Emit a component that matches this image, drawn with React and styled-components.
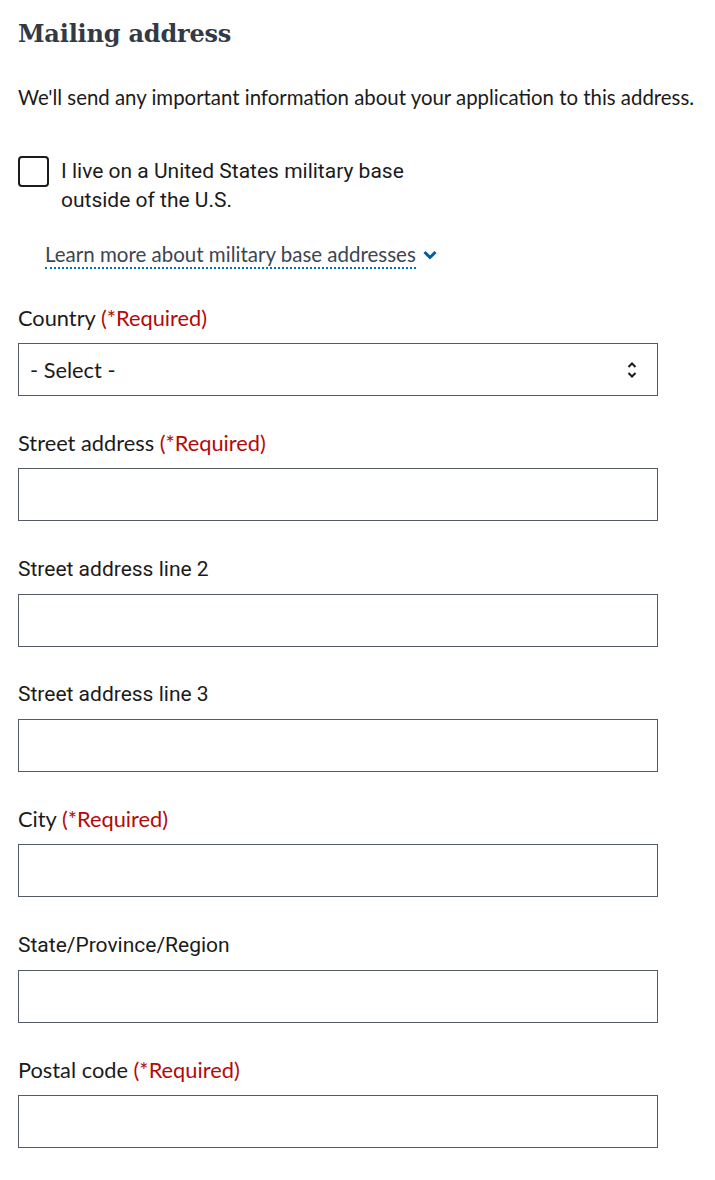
import styled, { createGlobalStyle } from "styled-components";

const GlobalStyle = createGlobalStyle`
  body {
    margin: 0;
    background: #ffffff;
    font-family: "Lato", "Liberation Sans", sans-serif;
    color: #1b1b1b;
  }
`;

export default function App() {
  return (
    <>
      <GlobalStyle />
      <Page>
        <Heading>Mailing address</Heading>
        <Intro>
          We'll send any important information about your application to this
          address.
        </Intro>
        <CheckRow>
          <Box type="checkbox" id="military" />
          <CheckLabel htmlFor="military">
            I live on a United States military base outside of the U.S.
          </CheckLabel>
        </CheckRow>
        <LearnMore>
          <LinkText>Learn more about military base addresses</LinkText>
          <svg width="14" height="10" viewBox="0 0 14 10">
            <path d="M1.5 2 L7 7.5 L12.5 2" fill="none" stroke="#005ea2" strokeWidth="3" />
          </svg>
        </LearnMore>
        <Field $first>
          <Label>
            Country <Required>(*Required)</Required>
          </Label>
          <SelectBox>
            <span>- Select -</span>
            <svg width="10" height="18" viewBox="0 0 10 18">
              <path d="M1.5 6 L5 2.5 L8.5 6" fill="none" stroke="#1b1b1b" strokeWidth="2" />
              <path d="M1.5 12 L5 15.5 L8.5 12" fill="none" stroke="#1b1b1b" strokeWidth="2" />
            </svg>
          </SelectBox>
        </Field>
        <Field>
          <Label>
            Street address <Required>(*Required)</Required>
          </Label>
          <Input />
        </Field>
        <Field>
          <Label $alt>Street address line 2</Label>
          <Input />
        </Field>
        <Field>
          <Label $alt>Street address line 3</Label>
          <Input />
        </Field>
        <Field>
          <Label>
            City <Required>(*Required)</Required>
          </Label>
          <Input />
        </Field>
        <Field>
          <Label $alt>State/Province/Region</Label>
          <Input />
        </Field>
        <Field>
          <Label>
            Postal code <Required>(*Required)</Required>
          </Label>
          <Input />
        </Field>
      </Page>
    </>
  );
}

const Page = styled.div`
  padding: 17px 18px 40px;
  width: 640px;
`;

const Heading = styled.h2`
  margin: 0;
  font-family: "DejaVu Serif", "Liberation Serif", serif;
  font-weight: 700;
  font-size: 24px;
  line-height: 34px;
  letter-spacing: -0.2px;
  color: #323a45;
`;

const Intro = styled.p`
  margin: 32px 0 0;
  width: 700px;
  font-size: 20.4px;
  line-height: 28px;
`;

const CheckRow = styled.div`
  margin-top: 45px;
  display: flex;
  align-items: flex-start;
  gap: 12px;
`;

const Box = styled.input`
  appearance: none;
  margin: 0;
  flex: none;
  width: 31px;
  height: 31px;
  border: 2px solid #1b1b1b;
  border-radius: 4px;
  background: #fff;
  box-sizing: border-box;
`;

const CheckLabel = styled.label`
  max-width: 360px;
  font-family: "Roboto", "Liberation Sans", sans-serif;
  font-size: 21px;
  line-height: 29px;
  margin-top: 1px;
`;

const LearnMore = styled.div`
  margin: 26px 0 0 27px;
  display: flex;
  align-items: center;
  gap: 7px;
  line-height: 26px;
`;

const LinkText = styled.span`
  font-size: 20.5px;
  color: #3d4551;
  border-bottom: 2px dotted #0071bb;
`;

const Field = styled.div`
  margin-top: ${(p) => (p.$first ? "36px" : "34.33px")};
`;

const Label = styled.label`
  display: block;
  font-family: ${(p) =>
    p.$alt ? `"Roboto", "Liberation Sans", sans-serif` : `"Lato", "Liberation Sans", sans-serif`};
  font-size: ${(p) => (p.$alt ? "21px" : "21.8px")};
  line-height: 26px;
  color: #1b1b1b;
`;

const Required = styled.span`
  color: #b50909;
`;

const Input = styled.input`
  display: block;
  margin-top: 12px;
  width: 640px;
  height: 53px;
  box-sizing: border-box;
  border: 1px solid #565c65;
  border-radius: 0;
  font-size: 19px;
  padding: 0 12px;
  background: #fff;
`;

const SelectBox = styled.div`
  margin-top: 12px;
  width: 640px;
  height: 53px;
  box-sizing: border-box;
  border: 1px solid #565c65;
  padding: 0 20px 0 11px;
  display: flex;
  align-items: center;
  justify-content: space-between;
  font-size: 21.8px;
`;
